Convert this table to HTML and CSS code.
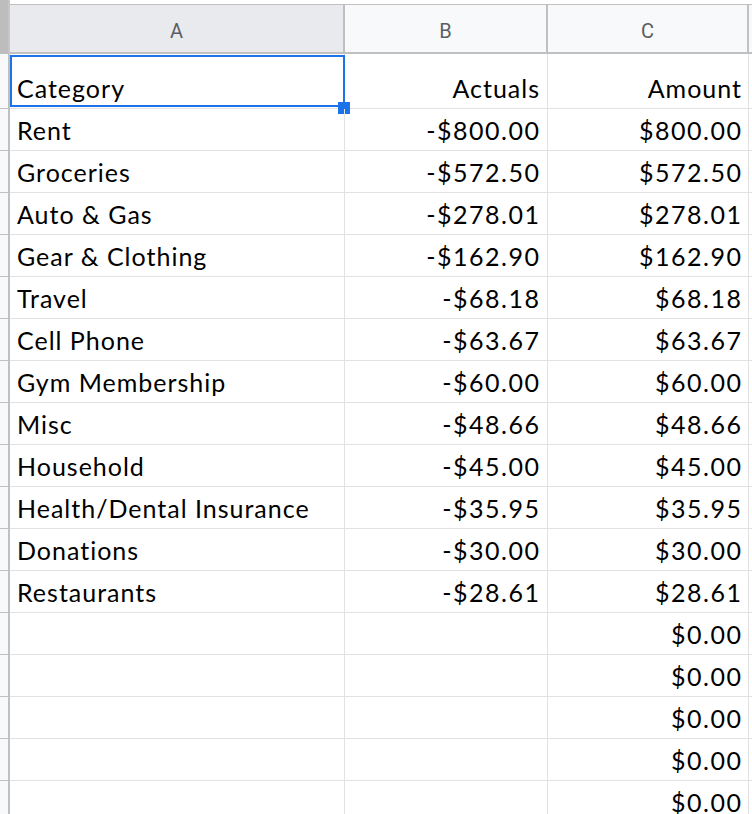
FILE: index.html
```html
<!DOCTYPE html>
<html>
<head>
<meta charset="utf-8">
<link rel="stylesheet" href="styles.css">
</head>
<body>
<div class="sheet">
  <div class="row head">
    <div class="rh corner"></div>
    <div class="c a hsel">A</div>
    <div class="c b">B</div>
    <div class="c cc">C</div>
    <div class="c d"></div>
  </div>
  <div class="row first">
    <div class="rh"></div>
    <div class="c a">Category</div>
    <div class="c b">Actuals</div>
    <div class="c cc">Amount</div>
    <div class="c d"></div>
    <div class="selection"><span class="handle"></span></div>
  </div>
  <div class="row"><div class="rh"></div><div class="c a">Rent</div><div class="c b num">-$800.00</div><div class="c cc num">$800.00</div><div class="c d"></div></div>
  <div class="row"><div class="rh"></div><div class="c a">Groceries</div><div class="c b num">-$572.50</div><div class="c cc num">$572.50</div><div class="c d"></div></div>
  <div class="row"><div class="rh"></div><div class="c a">Auto &amp; Gas</div><div class="c b num">-$278.01</div><div class="c cc num">$278.01</div><div class="c d"></div></div>
  <div class="row"><div class="rh"></div><div class="c a">Gear &amp; Clothing</div><div class="c b num">-$162.90</div><div class="c cc num">$162.90</div><div class="c d"></div></div>
  <div class="row"><div class="rh"></div><div class="c a">Travel</div><div class="c b num">-$68.18</div><div class="c cc num">$68.18</div><div class="c d"></div></div>
  <div class="row"><div class="rh"></div><div class="c a">Cell Phone</div><div class="c b num">-$63.67</div><div class="c cc num">$63.67</div><div class="c d"></div></div>
  <div class="row"><div class="rh"></div><div class="c a">Gym Membership</div><div class="c b num">-$60.00</div><div class="c cc num">$60.00</div><div class="c d"></div></div>
  <div class="row"><div class="rh"></div><div class="c a">Misc</div><div class="c b num">-$48.66</div><div class="c cc num">$48.66</div><div class="c d"></div></div>
  <div class="row"><div class="rh"></div><div class="c a">Household</div><div class="c b num">-$45.00</div><div class="c cc num">$45.00</div><div class="c d"></div></div>
  <div class="row"><div class="rh"></div><div class="c a">Health/Dental Insurance</div><div class="c b num">-$35.95</div><div class="c cc num">$35.95</div><div class="c d"></div></div>
  <div class="row"><div class="rh"></div><div class="c a">Donations</div><div class="c b num">-$30.00</div><div class="c cc num">$30.00</div><div class="c d"></div></div>
  <div class="row"><div class="rh"></div><div class="c a">Restaurants</div><div class="c b num">-$28.61</div><div class="c cc num">$28.61</div><div class="c d"></div></div>
  <div class="row"><div class="rh"></div><div class="c a"></div><div class="c b"></div><div class="c cc num">$0.00</div><div class="c d"></div></div>
  <div class="row"><div class="rh"></div><div class="c a"></div><div class="c b"></div><div class="c cc num">$0.00</div><div class="c d"></div></div>
  <div class="row"><div class="rh"></div><div class="c a"></div><div class="c b"></div><div class="c cc num">$0.00</div><div class="c d"></div></div>
  <div class="row"><div class="rh"></div><div class="c a"></div><div class="c b"></div><div class="c cc num">$0.00</div><div class="c d"></div></div>
  <div class="row"><div class="rh"></div><div class="c a"></div><div class="c b"></div><div class="c cc num">$0.00</div><div class="c d"></div></div>
</div>
</body>
</html>
```

FILE: styles.css
```css
html, body {
  margin: 0;
  padding: 0;
  background: #ffffff;
  overflow: hidden;
}
.sheet {
  width: 752px;
  height: 814px;
  overflow: hidden;
  padding-top: 4px;
  box-sizing: border-box;
  font-family: Lato, "Open Sans", sans-serif;
  font-size: 25px;
  letter-spacing: 1px;
  color: #000000;
}
.row {
  display: flex;
  position: relative;
  height: 42px;
  box-sizing: border-box;
  border-bottom: 1px solid #e2e2e2;
}
.row .rh {
  width: 8px;
  flex: none;
  background: #f8f9fa;
  border-right: 2px solid #c0c0c0;
  box-shadow: 0 1px 0 #c0c0c0;
}
.c {
  flex: none;
  box-sizing: border-box;
  display: flex;
  align-items: flex-end;
  padding-bottom: 5px;
  line-height: 30px;
  white-space: nowrap;
  overflow: hidden;
}
.c.a {
  width: 335px;
  border-right: 1px solid #e2e2e2;
  padding-left: 7px;
}
.c.b {
  width: 203px;
  border-right: 1px solid #e2e2e2;
  justify-content: flex-end;
  padding-right: 7px;
}
.c.cc {
  width: 201px;
  border-right: 1px solid #e2e2e2;
  justify-content: flex-end;
  padding-right: 6px;
}
.c.num {
  letter-spacing: 1.5px;
}
.c.b.num {
  padding-right: 6.5px;
}
.c.cc.num {
  padding-right: 5.5px;
}
.c.d {
  flex: 1;
}
.row.first {
  height: 55px;
}
.row.head {
  height: 50px;
  border-top: 1px solid #c0c0c0;
  border-bottom: 2px solid #c0c0c0;
  background: #f8f9fa;
}
.row.head .rh.corner {
  margin-top: -5px;
  height: 54px;
  background: #bdbdbd;
  border-right: 2px solid #c6c6c6;
  box-shadow: none;
}
.row.head .c {
  align-items: center;
  justify-content: center;
  padding: 4px 0 0 0;
  font-family: Roboto, "Liberation Sans", Arial, sans-serif;
  font-size: 20px;
  letter-spacing: 0;
  color: #5a5e63;
  border-right: 2px solid #c0c0c0;
}
.row.head .c.a {
  width: 335px;
}
.row.head .c.b {
  width: 203px;
}
.row.head .c.cc {
  width: 201px;
}
.row.head .c.d {
  border-right: none;
}
.row.head .c.hsel {
  background: #e8eaed;
}
.selection {
  position: absolute;
  left: 10px;
  top: 1px;
  width: 335px;
  height: 52px;
  box-sizing: border-box;
  border: 2px solid #1a73e8;
  pointer-events: none;
}
.handle {
  position: absolute;
  right: -7px;
  bottom: -9px;
  width: 12px;
  height: 12px;
  background: #1a73e8;
}
```
